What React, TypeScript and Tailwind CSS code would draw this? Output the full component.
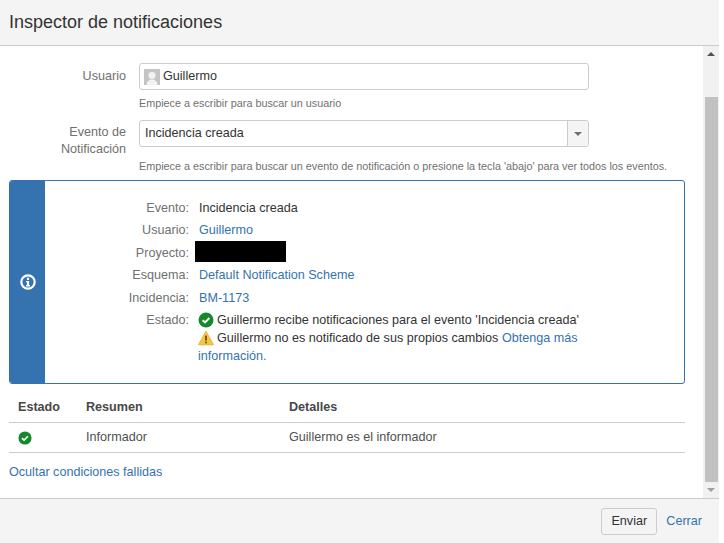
const FONT = "font-['Liberation_Sans',Arial,sans-serif]";

function CheckIcon({ className }: { className?: string }) {
  return (
    <svg viewBox="0 0 16 16" className={className}>
      <circle cx="8" cy="8" r="7.5" fill="#14892c" />
      <path d="M4.6 8.3 L7 10.4 L11.4 6" fill="none" stroke="#fff" strokeWidth="2" />
    </svg>
  );
}

function WarnIcon() {
  return (
    <svg viewBox="0 0 16 16" className="w-[16px] h-[16px] shrink-0">
      <path d="M8 1 L15.5 14.6 Q15.6 15 15 15 L1 15 Q0.4 15 0.5 14.6 Z" fill="#f6c342" stroke="#d9a93a" strokeWidth="0.6" />
      <rect x="7.2" y="5.6" width="1.6" height="5" fill="#594300" />
      <rect x="7.2" y="11.6" width="1.6" height="1.7" fill="#594300" />
    </svg>
  );
}

function Row({ label, children }: { label: string; children: React.ReactNode }) {
  return (
    <div className="flex mb-[4.4px] leading-[18px]">
      <div className="w-[144px] shrink-0 text-right text-[#707070]">{label}</div>
      <div className="ml-[10px] w-[390px] text-[#333]">{children}</div>
    </div>
  );
}

const A = "text-[#3572b0]";

export default function App() {
  return (
    <div className={`${FONT} w-[724px] h-[543px] bg-white text-[12.6px] text-[#333] overflow-hidden`}>
      <div className="w-[719px] h-[543px] flex flex-col">
        <div className="h-[46px] shrink-0 bg-[#f4f4f4] border-b border-[#cccccc] pl-[9px] pt-[10px] text-[18px] leading-[24px] text-[#333]">
          Inspector de notificaciones
        </div>
        <div className="flex-1 flex min-h-0 overflow-hidden">
          <div className="w-[703px] shrink-0 pt-[17px] pl-[9px]">
            <div className="flex items-start">
              <div className="w-[117px] shrink-0 text-right text-[#707070] leading-[18px] pt-[4px]">Usuario</div>
              <div className="ml-[13px] w-[450px] h-[27px] border border-[#cccccc] rounded-[3px] flex items-center pl-[4px]">
                <svg viewBox="0 0 16 16" className="w-[16px] h-[16px]">
                  <rect width="16" height="16" fill="#c4c4c4" />
                  <circle cx="8" cy="6.5" r="3.6" fill="#f2f2f2" />
                  <path d="M2.5 16 Q3 10.5 8 10.5 Q13 10.5 13.5 16 Z" fill="#f2f2f2" />
                </svg>
                <span className="ml-[3px]">Guillermo</span>
              </div>
            </div>
            <div className="ml-[130px] mt-[7px] text-[10.8px] leading-[13px] text-[#707070]">Empiece a escribir para buscar un usuario</div>
            <div className="flex items-start mt-[10px]">
              <div className="w-[117px] shrink-0 text-right text-[#707070] leading-[17px] pt-[4px] -mb-[1px]">Evento de<br />Notificación</div>
              <div className="ml-[13px] w-[450px] h-[27px] border border-[#cccccc] rounded-[3px] flex items-center justify-between pl-[5px]">
                <span className="-mt-[1px]">Incidencia creada</span>
                <div className="w-[21px] h-full bg-[#f4f4f4] border-l border-[#cccccc] flex items-center justify-center rounded-r-[3px]">
                  <div className="w-0 h-0 border-x-[4px] border-x-transparent border-t-[4px] border-t-[#707070]" />
                </div>
              </div>
            </div>
            <div className="ml-[130px] mt-[3px] text-[10.8px] leading-[13px] text-[#707070]">Empiece a escribir para buscar un evento de notificación o presione la tecla 'abajo' para ver todos los eventos.</div>
            <div className="mt-[7px] w-[676px] h-[204px] border border-[#3572b0] rounded-[3px] flex overflow-hidden">
              <div className="w-[35px] shrink-0 bg-[#3572b0] flex items-center justify-center">
                <svg viewBox="0 0 16 16" className="w-[16px] h-[16px]">
                  <circle cx="8" cy="8" r="6.7" fill="none" stroke="#fff" strokeWidth="2.2" />
                  <rect x="6.9" y="3.7" width="2.2" height="2.2" fill="#fff" />
                  <path d="M6 6.9H9.1V11H10V12.4H6V11H6.9V8.2H6Z" fill="#fff" />
                </svg>
              </div>
              <div className="pt-[18px]">
                <Row label="Evento:">Incidencia creada</Row>
                <Row label="Usuario:"><span className={A}>Guillermo</span></Row>
                <Row label="Proyecto:">
                  <div className="-ml-[4px] -mt-[3px] w-[91px] h-[21px] bg-black" />
                </Row>
                <Row label="Esquema:"><span className={A}>Default Notification Scheme</span></Row>
                <Row label="Incidencia:"><span className={A}>BM-1173</span></Row>
                <Row label="Estado:">
                  <div className="flex items-center gap-[3px] -ml-[1px]"><CheckIcon className="w-[16px] h-[16px] shrink-0" /><span>Guillermo recibe notificaciones para el evento 'Incidencia creada'</span></div>
                  <div className="flex items-center gap-[3px] -ml-[1px]">
                    <WarnIcon />
                    <span>Guillermo no es notificado de sus propios cambios <span className={A}>Obtenga más</span></span>
                  </div>
                  <div className={`-ml-[1px] ${A}`}>información.</div>
                </Row>
              </div>
            </div>
            <div className="w-[676px] mt-[12px]">
              <div className="flex h-[27px] border-b border-[#cccccc] font-bold text-[#484848] leading-[22px]">
                <div className="w-[77px] pl-[9px]">Estado</div>
                <div className="w-[203px]">Resumen</div>
                <div>Detalles</div>
              </div>
              <div className="flex h-[30px] items-center border-b border-[#cccccc]">
                <div className="w-[77px] pl-[9px]"><CheckIcon className="w-[14px] h-[14px]" /></div>
                <div className="w-[203px] text-[#505050]">Informador</div>
                <div className="text-[#505050]">Guillermo es el informador</div>
              </div>
            </div>
            <div className={`mt-[10px] leading-[18px] ${A}`}>Ocultar condiciones fallidas</div>
          </div>
          <div className="w-[16px] shrink-0 bg-[#f1f1f1] flex flex-col items-center">
            <div className="h-[16px] w-full shrink-0 flex items-center justify-center">
              <div className="w-0 h-0 border-x-[4px] border-x-transparent border-b-[4px] border-b-[#505050]" />
            </div>
            <div className="h-[35px] shrink-0" />
            <div className="w-[13px] flex-1 bg-[#c1c1c1]" />
            <div className="h-[16px] w-full shrink-0 flex items-center justify-center">
              <div className="w-0 h-0 border-x-[4px] border-x-transparent border-t-[4px] border-t-[#a0a0a0]" />
            </div>
          </div>
        </div>
        <div className="h-[45px] shrink-0 bg-[#f4f4f4] border-t border-[#cccccc] flex items-start justify-end pt-[9px] pr-[17px]">
          <div className="w-[56px] h-[27px] border border-[#cccccc] rounded-[3px] bg-[#f4f4f4] flex items-center justify-center text-[#333]">Enviar</div>
          <div className={`ml-[9px] leading-[27px] ${A}`}>Cerrar</div>
        </div>
      </div>
    </div>
  );
}
